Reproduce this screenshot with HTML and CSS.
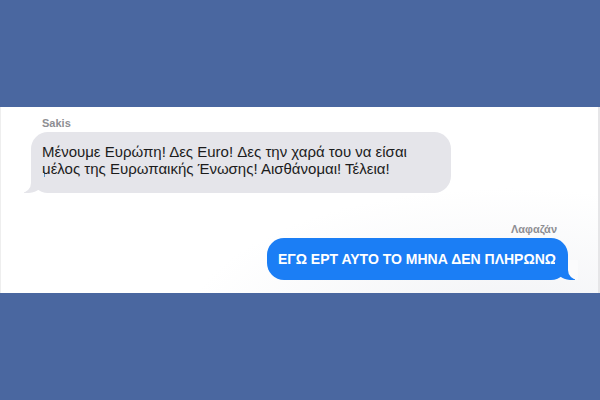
FILE: index.html
```html
<!DOCTYPE html>
<html lang="el">
<head>
  <meta charset="UTF-8" />
  <title>Sakis - Λαφαζάν</title>
  <link rel="stylesheet" href="styles.css">
</head>
<body>

  <!-- Λωρίδα συνομιλίας -->
  <div class="chat">
    <div class="msg them">
      <div class="name">Sakis</div>
      <div class="bubble">Μένουμε Ευρώπη! Δες Euro! Δες την χαρά του να είσαι μέλος της Ευρωπαικής Ένωσης! Αισθάνομαι! Τέλεια!</div>
    </div>

    <div class="msg me">
      <div class="name">Λαφαζάν</div>
      <div class="bubble">ΕΓΩ ΕΡΤ ΑΥΤΟ ΤΟ ΜΗΝΑ ΔΕΝ ΠΛΗΡΩΝΩ</div>
    </div>
  </div>

</body>
</html>
```

FILE: styles.css
```css
/* ----------------- Σελίδα ----------------- */
body {
  background-color: #4a67a0;
  margin: 0;
  height: 100vh;
  overflow: hidden;
  font-family: 'Liberation Sans', Arial, sans-serif;
}

.chat {
  margin-top: 107px;
  height: 186px;
  box-sizing: border-box;
  padding: 10px 30px 0 30px;
  background: radial-gradient(ellipse at 85% 120%, #f1f2f5 0%, #ffffff 45%);
  border-left: 1px solid #eeeeee;
  border-right: 2px solid #e6e6e8;
  display: flex;
  flex-direction: column;
}

/* ----------------- Μηνύματα ----------------- */
.msg {
  display: flex;
  flex-direction: column;
}
.msg.them {
  align-items: flex-start;
}
.msg.me {
  align-items: flex-end;
  margin-top: 30px;
}

.name {
  font-size: 11px;
  line-height: 13px;
  font-weight: bold;
  color: #8e8e93;
  margin: 0 11px 2px 11px;
}

.bubble {
  position: relative;
  border-radius: 17px;
  font-size: 15px;
  line-height: 17px;
}

.them .bubble {
  width: 420px;
  box-sizing: border-box;
  padding: 11px 30px 16px 11px;
  background: #e5e5ea;
  color: #1c1c1c;
}

.me .bubble {
  padding: 11px 12px 11px 11px;
  background: #1b7ef5;
  color: #ffffff;
  font-size: 14px;
  line-height: 20px;
  font-weight: bold;
}

/* colitas de burbuja */
.bubble::before,
.bubble::after {
  content: "";
  position: absolute;
  bottom: 0;
  height: 20px;
}
.them .bubble::before {
  left: -7px;
  width: 20px;
  background: #e5e5ea;
  border-bottom-right-radius: 15px;
}
.them .bubble::after {
  left: -10px;
  width: 10px;
  background: #ffffff;
  border-bottom-right-radius: 10px;
}
.me .bubble::before {
  right: -7px;
  width: 20px;
  background: #1b7ef5;
  border-bottom-left-radius: 15px;
}
.me .bubble::after {
  right: -10px;
  width: 10px;
  background: #fbfbfc;
  border-bottom-left-radius: 10px;
}
```
